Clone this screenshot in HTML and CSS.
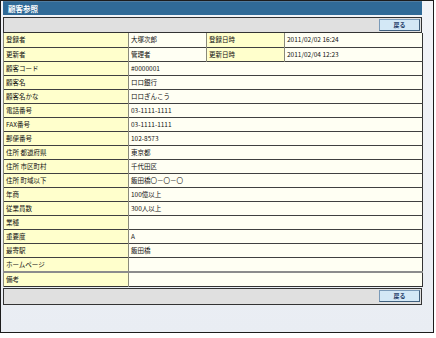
FILE: index.html
```html
<!DOCTYPE html>
<html lang="ja">
<head>
  <meta charset="UTF-8" />
  <title>顧客参照</title>
  <link rel="stylesheet" href="styles.css">
</head>
<body>
  <div class="window">
    <div class="title-bar">顧客参照</div>

    <div class="toolbar">
      <button class="back-btn">戻る</button>
    </div>

    <table class="detail">
      <colgroup>
        <col class="c-label">
        <col class="c-value">
        <col class="c-label2">
        <col class="c-value2">
      </colgroup>
      <tr><th>登録者</th><td>大塚次郎</td><th>登録日時</th><td>2011/02/02 16:24</td></tr>
      <tr><th>更新者</th><td>管理者</td><th>更新日時</th><td>2011/02/04 12:23</td></tr>
      <tr><th>顧客コード</th><td colspan="3">#0000001</td></tr>
      <tr><th>顧客名</th><td colspan="3">ロロ銀行</td></tr>
      <tr><th>顧客名かな</th><td colspan="3">ロロぎんこう</td></tr>
      <tr><th>電話番号</th><td colspan="3">03-1111-1111</td></tr>
      <tr><th>FAX番号</th><td colspan="3">03-1111-1111</td></tr>
      <tr><th>郵便番号</th><td colspan="3">102-8573</td></tr>
      <tr><th>住所 都道府県</th><td colspan="3">東京都</td></tr>
      <tr><th>住所 市区町村</th><td colspan="3">千代田区</td></tr>
      <tr><th>住所 町域以下</th><td colspan="3">飯田橋〇－〇－〇</td></tr>
      <tr><th>年商</th><td colspan="3">100億以上</td></tr>
      <tr><th>従業員数</th><td colspan="3">300人以上</td></tr>
      <tr><th>業種</th><td colspan="3"></td></tr>
      <tr><th>重要度</th><td colspan="3">A</td></tr>
      <tr><th>最寄駅</th><td colspan="3">飯田橋</td></tr>
      <tr><th>ホームページ</th><td colspan="3"></td></tr>
      <tr class="note-row"><th>備考</th><td colspan="3"></td></tr>
    </table>

    <div class="toolbar bottom">
      <button class="back-btn">戻る</button>
    </div>
  </div>
</body>
</html>
```

FILE: styles.css
```css
* {
  box-sizing: border-box;
}
body {
  margin: 0;
  background: #ffffff;
  font-family: "Noto Sans CJK JP", "Noto Sans", sans-serif;
  color: #111111;
}
.window {
  width: 434px;
  height: 333px;
  border: 1px solid #1c1c1c;
  background: linear-gradient(#f2f4f8, #e9edf3);
  padding: 0 11px 0 2px;
}
.title-bar {
  height: 14px;
  margin-bottom: 2px;
  background: #306a97;
  border-top: 1px solid #4f7ca0;
  color: #ffffff;
  font-size: 7.5px;
  font-weight: bold;
  line-height: 13px;
  padding-left: 5px;
}
.toolbar {
  height: 16px;
  background: #e0e0e0;
  border: 1px solid #333333;
  display: flex;
  justify-content: flex-end;
  align-items: center;
  padding-right: 1px;
}
.toolbar.bottom {
  margin-top: 1px;
  height: 17px;
}
.back-btn {
  width: 41px;
  height: 12px;
  padding: 0;
  background: #d3e8f6;
  border: 1px solid #7a9ab8;
  border-right-color: #40607e;
  border-bottom-color: #40607e;
  color: #1d3a66;
  font-family: inherit;
  font-size: 6px;
  font-weight: bold;
  line-height: 10px;
}
.detail {
  width: 419px;
  table-layout: fixed;
  border-collapse: collapse;
  border: 1px solid #333333;
  border-top: none;
  font-size: 6.5px;
}
.c-label { width: 125px; }
.c-value { width: 78px; }
.c-label2 { width: 78px; }
.c-value2 { width: 138px; }
.detail th,
.detail td {
  height: 14px;
  padding: 0 2px;
  border-top: 1px solid #404040;
  border-left: 1px solid #8a8a7a;
  text-align: left;
  font-weight: normal;
  white-space: nowrap;
  overflow: hidden;
  line-height: 13px;
}
.detail tr:first-child th,
.detail tr:first-child td {
  border-top: none;
}
.detail th {
  background: #ffffcc;
}
.detail td {
  background: #fffff3;
}
.detail .note-row th,
.detail .note-row td {
  border-top: 2px solid #8c8c8c;
}
```
